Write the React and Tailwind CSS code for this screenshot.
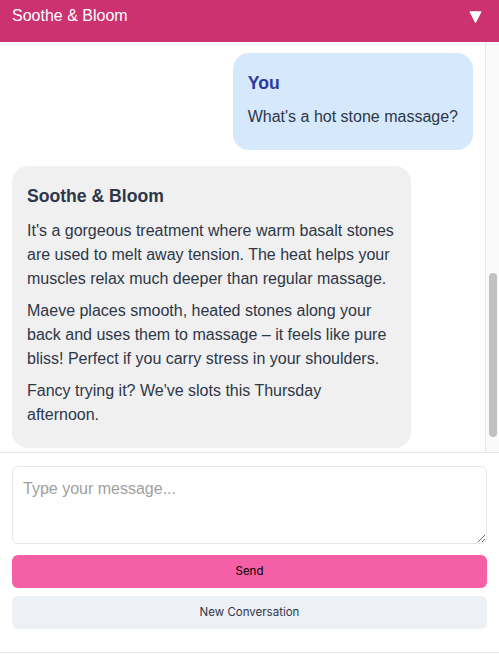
import React from 'react';

const Bubble = ({ from, paras }) => {
  const isUser = from === 'user';
  return (
    <div
      className={`max-w-[399px] rounded-[16px] px-[15px] pb-[13px] pt-[17px] ${
        isUser ? 'self-end bg-[#d6e8fc]' : 'self-start bg-[#f0f0f0]'
      }`}
    >
      <div
        className={`mb-[9px] text-[17.6px] font-bold leading-[26.4px] ${
          isUser ? 'text-[#2b3a9c]' : 'text-[#2d3748]'
        }`}
      >
        {isUser ? 'You' : 'Soothe & Bloom'}
      </div>
      {paras.map((p, i) => (
        <p key={i} className="mb-2 text-[16px] leading-6 text-[#2d3748]">
          {p}
        </p>
      ))}
    </div>
  );
};

export default function App() {
  return (
    <div className="flex h-[653px] w-full flex-col bg-white font-['Liberation_Sans',Arial,sans-serif]">
      <div className="flex h-[42px] shrink-0 items-start justify-between bg-[#cc3170] pl-3 pr-[17px] pt-[7px]">
        <span className="text-[16px] leading-[18px] text-white">Soothe &amp; Bloom</span>
        <svg width="13" height="13" viewBox="0 0 13 13" className="mt-[3px]">
          <path d="M1 1.2 H12 Q12.8 1.2 12.4 2 L7.2 12.2 Q6.5 13.2 5.8 12.2 L0.6 2 Q0.2 1.2 1 1.2 Z" fill="#ffffff" />
        </svg>
      </div>

      <div className="flex h-[410px] shrink-0">
        <div className="flex min-w-0 flex-1 flex-col gap-4 overflow-hidden px-3 pt-[11px]">
          <Bubble from="user" paras={["What's a hot stone massage?"]} />
          <Bubble
            from="bot"
            paras={[
              "It's a gorgeous treatment where warm basalt stones are used to melt away tension. The heat helps your muscles relax much deeper than regular massage.",
              'Maeve places smooth, heated stones along your back and uses them to massage – it feels like pure bliss! Perfect if you carry stress in your shoulders.',
              "Fancy trying it? We've slots this Thursday afternoon.",
            ]}
          />
        </div>
        <div className="flex w-[14px] shrink-0 flex-col border-l border-[#e8e8e8] bg-[#fafafa] pl-[3px] pt-[231px]">
          <div className="h-[164px] w-[8px] rounded-full bg-[#c1c1c1]" />
        </div>
      </div>

      <div className="flex shrink-0 flex-col border-y border-[#e2e8f0] px-3 pb-[23px] pt-[13px]">
        <textarea
          placeholder="Type your message..."
          className="h-[78px] w-full rounded-[6px] border border-[#e2e8f0] px-[10px] py-[10px] text-[16px] leading-6 text-[#2d3748] outline-none placeholder:text-[#a0a0a0]"
        />
        <button className="mt-[11px] h-[33px] w-full rounded-[6px] bg-[#f45fa5] font-['Inter',sans-serif] text-[11.5px] text-black">
          Send
        </button>
        <button className="mt-2 h-[33px] w-full rounded-[6px] bg-[#edf0f5] font-['Inter',sans-serif] text-[11.5px] text-[#2d3748]">
          New Conversation
        </button>
      </div>
    </div>
  );
}
